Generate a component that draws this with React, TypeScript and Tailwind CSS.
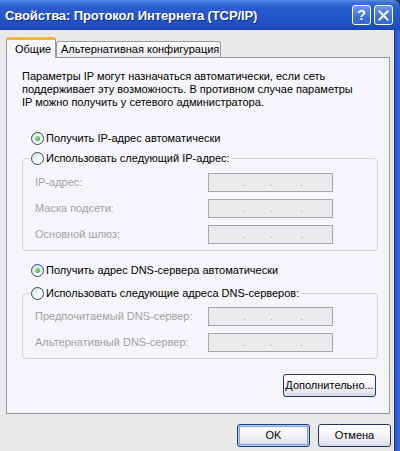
import React from "react";

function Radio({ checked }: { checked?: boolean }) {
  return (
    <span className="flex h-[13px] w-[13px] shrink-0 items-center justify-center rounded-full border border-[#1c5180] bg-[linear-gradient(135deg,#d8d8d4,#ffffff_70%)]">
      {checked && (
        <span className="h-[5px] w-[5px] rounded-full bg-[radial-gradient(circle_at_35%_35%,#9ae898,#21a121)]" />
      )}
    </span>
  );
}

function IpBox() {
  return (
    <div className="flex h-[19px] w-[125px] items-end border border-[#a7a6aa] bg-[#ebeaed] pb-[3px] text-[11px] leading-none text-[#a9a9a9]">
      <span className="ml-[34px]">.</span>
      <span className="ml-[24px]">.</span>
      <span className="ml-[27px]">.</span>
    </div>
  );
}

function Field({ label }: { label: string }) {
  return (
    <div className="flex h-[19px] items-center">
      <span className="w-[173px] text-[#a3a3a3]">{label}</span>
      <IpBox />
    </div>
  );
}

function Group({ title, children, pt }: { title: string; children: React.ReactNode; pt: string }) {
  return (
    <fieldset className={`w-[356px] rounded-[4px] border border-[#d4d4d4] pb-[6px] pl-[12px] ${pt}`}>
      <legend className="ml-[-4px] flex h-[13px] items-center gap-[2px] pr-[2px]">
        <Radio />
        <span>{title}</span>
      </legend>
      <div className="flex flex-col gap-[7px]">{children}</div>
    </fieldset>
  );
}

function XpButton({ children, focused, w }: { children: React.ReactNode; focused?: boolean; w: string }) {
  return (
    <div
      className={`flex h-[23px] ${w} items-center justify-center rounded-[3px] border border-[#1d3a6e] bg-[linear-gradient(180deg,#ffffff_0%,#f6f6f9_45%,#e4e4ec_85%,#d2d5e2_100%)] text-black ${
        focused ? "shadow-[inset_0_0_0_1px_#b6cdf5,inset_0_0_0_2px_#7ea4ea]" : ""
      }`}
    >
      {children}
    </div>
  );
}

export default function App() {
  return (
    <div className="flex h-[451px] w-[400px] flex-col overflow-hidden bg-[#1b2e6b] font-['Liberation_Sans',Arial,sans-serif] text-[11px] leading-[13px] text-black">
      {/* Title bar */}
      <div className="flex h-[30px] shrink-0 items-center rounded-tr-[7px] bg-[linear-gradient(180deg,#5a8ae6_0%,#3a6dd8_10%,#2a5cd0_25%,#2456c9_60%,#1f4fc0_85%,#1a45ad_100%)] pl-[5px] pr-[7px]">
        <span className="flex-1 text-[13px] font-bold tracking-[-0.1px] text-white [text-shadow:1px_1px_0_#102d85]">
          Свойства: Протокол Интернета (TCP/IP)
        </span>
        <div className="flex gap-[3px]">
          <div className="flex h-[20px] w-[19px] items-center justify-center rounded-[3px] border border-white bg-[linear-gradient(180deg,#6d98ee,#3d6fe0_60%,#3566d8)] text-[14px] font-bold leading-none text-white">
            ?
          </div>
          <div className="flex h-[20px] w-[19px] items-center justify-center rounded-[3px] border border-white bg-[linear-gradient(180deg,#6d98ee,#3d6fe0_60%,#3566d8)]">
            <svg width="11" height="11" viewBox="0 0 11 11">
              <path d="M1.5 1.5 L9.5 9.5 M9.5 1.5 L1.5 9.5" stroke="white" strokeWidth="2" strokeLinecap="square" />
            </svg>
          </div>
        </div>
      </div>

      {/* Body */}
      <div className="flex flex-1">
        <div className="flex flex-1 flex-col bg-[#ebe8ea] pl-[6px]">
          {/* Tabs */}
          <div className="mt-[7px] flex h-[20px] items-end">
            <div className="relative z-10 -mb-[1px] flex h-[21px] w-[50px] items-center rounded-t-[3px] border-x border-t-[3px] border-x-[#919b9c] border-t-[#f6b53c] bg-[#f5f5fa] pl-[8px]">
              Общие
            </div>
            <div className="flex h-[16px] w-[165px] items-center rounded-t-[3px] border-x border-t border-[#919b9c] bg-[linear-gradient(180deg,#ffffff,#ecebef)] pl-[4px]">
              Альтернативная конфигурация
            </div>
          </div>

          {/* Panel */}
          <div className="flex h-[357px] w-[384px] flex-col border border-[#919b9c] bg-[#f5f5fa] pl-[15px] pt-[12px]">
            <p>
              Параметры IP могут назначаться автоматически, если сеть
              <br />
              поддерживает эту возможность. В противном случае параметры
              <br />
              IP можно получить у сетевого администратора.
            </p>

            <div className="ml-[9px] mt-[23px] flex h-[13px] items-center gap-[2px]">
              <Radio checked />
              <span>Получить IP-адрес автоматически</span>
            </div>

            <div className="mt-[7px]">
              <Group title="Использовать следующий IP-адрес:" pt="pt-[8px]">
                <Field label="IP-адрес:" />
                <Field label="Маска подсети:" />
                <Field label="Основной шлюз:" />
              </Group>
            </div>

            <div className="ml-[9px] mt-[13px] flex h-[13px] items-center gap-[2px]">
              <Radio checked />
              <span>Получить адрес DNS-сервера автоматически</span>
            </div>

            <div className="mt-[10px]">
              <Group title="Использовать следующие адреса DNS-серверов:" pt="pt-[7px]">
                <Field label="Предпочитаемый DNS-сервер:" />
                <Field label="Альтернативный DNS-сервер:" />
              </Group>
            </div>

            <div className="mr-[13px] mt-[15px] flex justify-end">
              <XpButton w="w-[93px]">Дополнительно...</XpButton>
            </div>
          </div>

          {/* Bottom buttons */}
          <div className="mt-[10px] flex justify-end gap-[8px] pr-[3px]">
            <XpButton w="w-[73px]" focused>
              OK
            </XpButton>
            <XpButton w="w-[73px]">Отмена</XpButton>
          </div>
        </div>
        <div className="w-[6px] border-l border-[#15338f] bg-[linear-gradient(90deg,#2a5ad0,#3b6ad8)]" />
      </div>
    </div>
  );
}
